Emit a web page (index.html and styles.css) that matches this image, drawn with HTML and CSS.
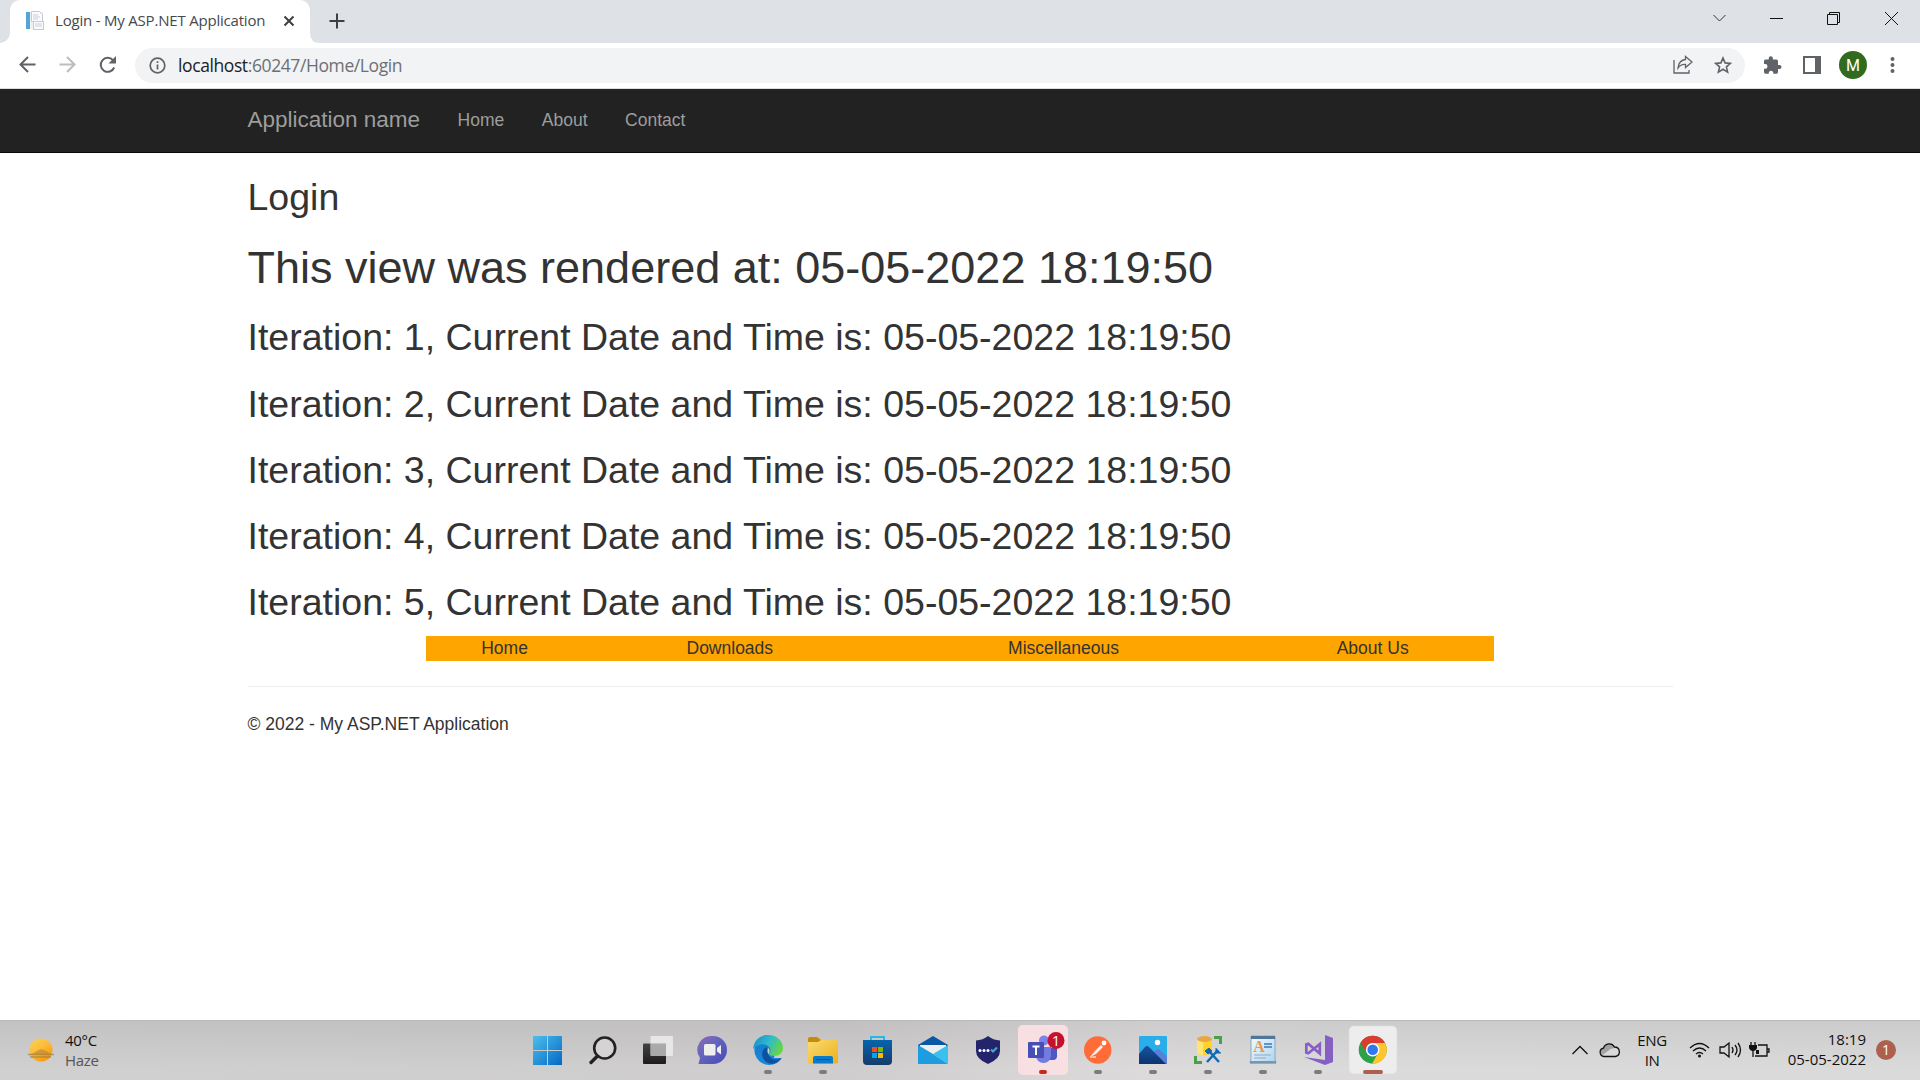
FILE: index.html
```html
<!DOCTYPE html>
<html lang="en">
<head>
<meta charset="utf-8">
<title>Login - My ASP.NET Application</title>
<link rel="stylesheet" href="styles.css">
</head>
<body>
<div class="desktop">
  <div class="tabstrip">
    <div class="tab">
      <svg class="favicon" width="20" height="20" viewBox="0 0 20 20"><rect x="1" y="1" width="17" height="17" fill="#eef0f4"/><rect x="1" y="1" width="4" height="17" fill="#54a5d6"/><path d="M6.500.5h8l3 3v7h-11z" fill="#fafbfd" stroke="#c5cad4"/><path d="M8 4h5M8 6h7M8 8h5" stroke="#c6cddb"/><rect x="8.500" y="10.500" width="10" height="8" fill="#fafbfd" stroke="#c5cad4"/><path d="M10 13h7M10 15h7" stroke="#c6cddb"/></svg>
      <span class="tab-title">Login - My ASP.NET Application</span>
      <svg width="12" height="12" viewBox="0 0 12 12" fill="none" stroke="#3c4043" stroke-width="2"><path d="M1.500 1.500l9 9M10.500 1.500l-9 9"/></svg>
      <svg class="tab-foot" width="10" height="10" viewBox="0 0 10 10"><path d="M0 0q0 10 10 10H0z" fill="#fff"/></svg>
    </div>
    <svg class="new-tab" width="16" height="16" viewBox="0 0 16 16" stroke="#3c4043" stroke-width="2"><path d="M8 .5v15M.5 8h15"/></svg>
    <svg class="window-controls" width="208" height="37" viewBox="0 0 208 37" fill="none" stroke="#111" stroke-width="1"><path d="M1.500 15l6 6 6-6" stroke="#333"/><path d="M58 18.500h13"/><path d="M115.500 14.500h10v10h-10zM117.500 14v-1.500h10v10H126"/><path d="M173 12l13 13M186 12l-13 13"/></svg>
  </div>
  <div class="toolbar">
    <svg width="97" height="45" viewBox="0 0 97 45" fill="none" stroke="#5f6368" stroke-width="2"><path d="M35.500 21.500H20.500M28 14l-7.500 7.500 7.500 7.500"/><path d="M59.500 21.500h15M67 14l7.500 7.500L67 29" stroke="#bbbdc0"/></svg>
    <svg class="reload" width="20" height="20" viewBox="0 0 20 20"><path d="M16.200 12.500A7 7 0 1 1 15 5.200" fill="none" stroke="#5f6368" stroke-width="2"/><path d="M18 1v7.500h-7.500z" fill="#5f6368"/></svg>
    <div class="omnibox">
      <svg width="17" height="17" viewBox="0 0 17 17" fill="none" stroke="#5f6368" stroke-width="1.700"><circle cx="8.500" cy="8.500" r="7.300"/><path d="M8.500 7.500v5M8.500 4.300v1.800"/></svg>
      <span class="url"><b>localhost</b>:60247/Home/Login</span>
      <svg class="share" width="20" height="20" viewBox="0 0 20 20" fill="none" stroke="#5f6368" stroke-width="1.300"><path d="M1 5v13h15v-3"/><path d="M12.500 1.500l6.500 5.500-6.500 5.500V9.500Q8 9 5 13q1-8 7.500-8.500z"/></svg>
      <svg width="18" height="18" viewBox="0 0 18 18" fill="none" stroke="#5f6368" stroke-width="1.600"><path d="M9 2l2.100 4.900 5.300.5-4 3.500 1.200 5.200L9 13.300l-4.600 2.800 1.200-5.200-4-3.500 5.300-.5z"/></svg>
    </div>
    <svg class="extension" width="19" height="19" viewBox="0 0 19 19"><path fill="#5f6368" d="M16.500 9H15V5q0-1.600-1.600-1.600H9.900v-1a2 2 0 0 0-4.200 0v1H2.400Q1 3.400 1 4.900v3.200h1.200a2.300 2.300 0 0 1 0 4.600H1V16q0 1.700 1.600 1.700h3.200v-1.200a2.300 2.300 0 0 1 4.500 0v1.200h3.200Q15 17.700 15 16v-3h1.500a2 2 0 0 0 0-4z"/></svg>
    <svg class="sidepanel" width="18" height="18" viewBox="0 0 18 18"><path d="M1 1h16v16H1z" fill="#fff" stroke="#5f6368" stroke-width="2"/><path d="M12 1h5v16h-5z" fill="#5f6368"/></svg>
    <div class="avatar">M</div>
    <svg class="more" width="5" height="18" viewBox="0 0 5 18" fill="#5f6368"><circle cx="2.500" cy="3" r="2"/><circle cx="2.500" cy="9" r="2"/><circle cx="2.500" cy="15" r="2"/></svg>
  </div>

  <div class="page">
    <nav class="navbar">
      <span class="brand">Application name</span>
      <span class="nav-link">Home</span>
      <span class="nav-link">About</span>
      <span class="nav-link">Contact</span>
    </nav>
    <main class="container">
      <h2>Login</h2>
      <h1>This view was rendered at: 05-05-2022 18:19:50</h1>
      <h2>Iteration: 1, Current Date and Time is: 05-05-2022 18:19:50</h2>
      <h2>Iteration: 2, Current Date and Time is: 05-05-2022 18:19:50</h2>
      <h2>Iteration: 3, Current Date and Time is: 05-05-2022 18:19:50</h2>
      <h2>Iteration: 4, Current Date and Time is: 05-05-2022 18:19:50</h2>
      <h2>Iteration: 5, Current Date and Time is: 05-05-2022 18:19:50</h2>
      <table class="menu"><tr><td>Home</td><td>Downloads</td><td>Miscellaneous</td><td>About Us</td></tr></table>
      <hr>
      <footer>© 2022 - My ASP.NET Application</footer>
    </main>
  </div>

  <div class="taskbar">
    <div class="weather">
      <svg width="28" height="28" viewBox="0 0 28 28"><defs><linearGradient id="sun" x1="0" y1="0" x2=".7" y2="1"><stop offset="0" stop-color="#fcd35a"/><stop offset=".5" stop-color="#fbbd3a"/><stop offset="1" stop-color="#f79a12"/></linearGradient></defs><circle cx="14" cy="13" r="11.500" fill="url(#sun)"/><path d="M4 17q4-1 6-3 4-3 7-1 4 1 6 4z" fill="#b98335" opacity=".6"/><path d="M1 17.500h26M3 20h21" stroke="#94733f" stroke-width="1.600" opacity=".6"/></svg>
      <div class="weather-text"><span>40°C</span><span class="muted">Haze</span></div>
    </div>
    <div class="apps">
      <svg viewBox="0 0 55 60"><defs><linearGradient id="win" gradientUnits="userSpaceOnUse" x1="13" y1="16" x2="42" y2="45"><stop offset="0" stop-color="#4cc0ec"/><stop offset="1" stop-color="#0467c4"/></linearGradient></defs><path fill="url(#win)" d="M13 16h14v14H13zM28 16h14v14H28zM13 31h14v14H13zM28 31h14v14H28z"/></svg>
      <svg viewBox="0 0 55 60" fill="none" stroke="#222"><circle cx="29.700" cy="28" r="10.500" stroke-width="2.600" fill="#d5d3d3"/><path d="M22 36.500l-6 6" stroke-width="3.400" stroke-linecap="round"/></svg>
      <svg viewBox="0 0 55 60"><defs><linearGradient id="tv" x1="0" y1="0" x2="0" y2="1"><stop offset="0" stop-color="#444"/><stop offset="1" stop-color="#1c1c1c"/></linearGradient></defs><rect x="13" y="23.500" width="23" height="20.500" rx="1" fill="url(#tv)"/><rect x="20.500" y="16" width="22.500" height="20" rx="1" fill="#ececec" opacity=".85"/><path d="M20.500 23.500H36V36H20.500z" fill="#999" opacity=".7"/></svg>
      <svg viewBox="0 0 55 60"><defs><linearGradient id="chat" x1="0" y1="0" x2="1" y2="1"><stop offset="0" stop-color="#9268b5"/><stop offset=".4" stop-color="#6566bd"/><stop offset="1" stop-color="#4648b8"/></linearGradient></defs><path d="M28 16a14 14 0 1 1 0 28H13.500l1.500-6A14 14 0 0 1 28 16z" fill="url(#chat)"/><rect x="19" y="24" width="11.500" height="11.500" rx="1.500" fill="#eee"/><path d="M32 28l4-3v9.500l-4-3z" fill="#eee"/></svg>
      <svg viewBox="0 0 55 60"><defs><linearGradient id="eg" x1="0" y1=".2" x2="1" y2=".6"><stop offset="0" stop-color="#1b8cd0"/><stop offset=".5" stop-color="#2fbcc8"/><stop offset="1" stop-color="#68d640"/></linearGradient><linearGradient id="eb" x1="0" y1="0" x2="0" y2="1"><stop offset="0" stop-color="#167ac8"/><stop offset="1" stop-color="#1787db"/></linearGradient></defs><path d="M42 38A15 15 0 1 1 28 15l8 12-2 11z" fill="url(#eb)"/><path d="M13 29C14 20 20 15 28 15c9 0 15 6 15 13 0 5-4 8-9 8-3 0-5-1-5-2 2-2 2-5 0-7-3-4-11-4-16 2z" fill="url(#eg)"/><path d="M27 27q-5 2-5 7 1 9 10 10 6-1 9-6-6 3-10 0-4-3-4-11z" fill="#11509f"/><path d="M28 27.500q2 2 1.500 4.500-1 1.500 0 2.500-2-1-2-3z" fill="#d1cfd0"/><rect class="dot" x="24" y="50" width="8" height="4" rx="2"/></svg>
      <svg viewBox="0 0 55 60"><defs><linearGradient id="fold" x1="0" y1="0" x2="1" y2="1"><stop offset="0" stop-color="#f9dc72"/><stop offset="1" stop-color="#edaf18"/></linearGradient></defs><path d="M13 19q0-2 2-2h7l4 3v4H13z" fill="#c98b04"/><path d="M13 22h10l3-2h17v22q0 1.500-1.500 1.500h-27Q13 43.500 13 42z" fill="url(#fold)"/><path d="M18 43.500V38q0-2 2-2h16q2 0 2 2v5.500z" fill="#087bcc"/><path d="M21 39.500h14" stroke="#075295"/><rect class="dot" x="24" y="50" width="8" height="4" rx="2"/></svg>
      <svg viewBox="0 0 55 60"><defs><linearGradient id="store" x1="0" y1="0" x2="0" y2="1"><stop offset="0" stop-color="#0764ae"/><stop offset="1" stop-color="#173b68"/></linearGradient></defs><path d="M21 22v-5h13v5" fill="none" stroke="#28b8e8" stroke-width="2"/><path d="M13 20h29v21q0 4-4 4H17q-4 0-4-4z" fill="url(#store)"/><path fill="#f05021" d="M22 27h5v5h-5z"/><path fill="#7aba00" d="M28 27h5v5h-5z"/><path fill="#04a4ef" d="M22 33h5v5h-5z"/><path fill="#fdb900" d="M28 33h5v5h-5z"/></svg>
      <svg viewBox="0 0 55 60"><path d="M13 25l15-9 15 9v5H13z" fill="#0a58a4"/><path d="M15 25h26v7L28 36l-13-4z" fill="#eee"/><path d="M13 25l15 9 15 10H13z" fill="#1d9ce0"/><path d="M43 25L28 34l15 10z" fill="#38c0ee"/></svg>
      <svg viewBox="0 0 55 60"><path d="M28 16q5 4 12 4.500V31q0 8-12 13-12-5-12-13V20.500Q23 20 28 16z" fill="#24246c"/><g fill="#fff"><circle cx="20" cy="30.500" r="1.500"/><circle cx="24" cy="30.500" r="1.500"/><circle cx="28" cy="30.500" r="1.500"/></g><path d="M31 29.500l2 2 4-4" fill="none" stroke="#42abc8" stroke-width="2"/></svg>
      <svg viewBox="0 0 55 60"><rect x="3" y="5" width="50" height="50" rx="5" fill="#f8e0e2"/><circle cx="29" cy="20.500" r="5" fill="#7b83eb"/><path d="M32 28h10v8q0 4-4 4h-4z" fill="#4e56bf"/><path d="M21 27h15v9q-1 7-7.500 7T21 36z" fill="#737be0"/><rect x="13" y="22" width="16" height="16" rx="1" fill="#484fb4"/><path d="M17.500 26.500h7M21 26.500V35" stroke="#fff" stroke-width="2"/><circle cx="41" cy="20.500" r="8.500" fill="#c4122e"/><text x="41" y="25.500" class="badge-text">1</text><rect x="24" y="50" width="8" height="4" rx="2" fill="#c42b1c"/></svg>
      <svg viewBox="0 0 55 60"><circle cx="27.700" cy="30" r="13.700" fill="#ff6c37"/><circle cx="34" cy="23" r="2.400" fill="#fff"/><path d="M20 37l4-5 7-7 2 2-7 7z" fill="#ffece5"/><path d="M20 37h6" stroke="#fff"/><rect class="dot" x="24" y="50" width="8" height="4" rx="2"/></svg>
      <svg viewBox="0 0 55 60"><defs><linearGradient id="mt" x1="0" y1="0" x2="0" y2="1"><stop offset="0" stop-color="#17559f"/><stop offset="1" stop-color="#0b3370"/></linearGradient></defs><rect x="14" y="16" width="28" height="28" rx="1" fill="#29aee9"/><path d="M26 35l5-5q2-2 4 0l7 7v7H26z" fill="#5b7fd8"/><path d="M14 34l6-7q2-2 4 0l17 17H14z" fill="url(#mt)"/><circle cx="32.500" cy="22.500" r="2.700" fill="#fff"/><rect class="dot" x="24" y="50" width="8" height="4" rx="2"/></svg>
      <svg viewBox="0 0 55 60"><path d="M17 19v13q0 3 7 3t8-3V19z" fill="#ffd42a"/><path d="M17 19v13q0 3 6 3V19z" fill="#ffe672"/><ellipse cx="24.500" cy="19" rx="7.500" ry="3" fill="#e8a744"/><path d="M34 17.500h6.500V24M15.500 36v6.500H22" fill="none" stroke="#4a9f4a" stroke-width="3"/><path d="M28 30l11 12M38 30L27 42" stroke="#1169b5" stroke-width="2.500"/><path d="M25 31l4-3 3 3-4 3zM36 28v5h5" fill="#1169b5" stroke="#1169b5"/><rect class="dot" x="24" y="50" width="8" height="4" rx="2"/></svg>
      <svg viewBox="0 0 55 60"><defs><linearGradient id="wp" x1="0" y1="0" x2="1" y2="1"><stop offset="0" stop-color="#f5fbff"/><stop offset="1" stop-color="#acd4ef"/></linearGradient></defs><path d="M16 16h24v23l1 4H15l1-4z" fill="url(#wp)" stroke="#86a9c4"/><path d="M16 16h24v3H16z" fill="#50779b"/><path d="M15 41h26v2.500H15z" fill="#7896b0"/><text x="24" y="32" class="wordpad-a">A</text><path d="M29 24h8M29 27h8" stroke="#3e78bd" stroke-width="1.500"/><path d="M19 35h17M19 38h12" stroke="#92a9bc"/><rect class="dot" x="24" y="50" width="8" height="4" rx="2"/></svg>
      <svg viewBox="0 0 55 60" fill="#865fc5"><path d="M35 15l8 3v24l-8 3-21-8 21 3z"/><path d="M16.300 24.500v8l2 .8 11.500-9.300v9.500L18.300 23.700z" fill="none" stroke="#865fc5" stroke-width="2.700"/><rect class="dot" x="24" y="50" width="8" height="4" rx="2"/></svg>
      <svg viewBox="0 0 55 60"><rect x="4" y="6" width="48" height="48" rx="5" fill="#ededed" stroke="#dedede" stroke-width=".7"/><circle cx="27.700" cy="29.700" r="14" fill="#2da04a"/><path d="M27.700 22.900H40A14 14 0 0 1 27 43.700l6-10.500z" fill="#fdc62d"/><path d="M15.500 22.900L21 32l2-8 5-1.100H40q-4-7.200-12.300-7.200-8 0-12.200 7.200z" fill="#dc3c30"/><circle cx="27.700" cy="29.700" r="6.800" fill="#fff"/><circle cx="27.700" cy="29.700" r="5.300" fill="#3079ed"/><rect x="18" y="50" width="20" height="4" rx="2" fill="#ad6050"/></svg>
    </div>
    <div class="tray">
      <svg class="chevron" width="16" height="10" viewBox="0 0 16 10" fill="none" stroke="#111" stroke-width="1.300"><path d="M.5 9L8 1.500 15.500 9"/></svg>
      <svg class="cloud" width="21" height="16" viewBox="0 0 21 16"><path d="M5 14.500a4.200 4.200 0 0 1-.5-8.300 6 6 0 0 1 11-1.200 4.800 4.800 0 0 1 1 9.500z" fill="#d8d8d8"/><path d="M1 9.500q.5-3 3.500-3.300a6 6 0 0 1 11-1.200l2 .5-6 1.500-8 6z" fill="#a2a2a2"/><path d="M5 14.500a4.200 4.200 0 0 1-.5-8.300 6 6 0 0 1 11-1.200 4.800 4.800 0 0 1 1 9.500z" fill="none" stroke="#111" stroke-width="1.300"/></svg>
      <div class="language"><span>ENG</span><span>IN</span></div>
      <svg class="status" width="81" height="18" viewBox="0 0 81 18" fill="none" stroke="#111" stroke-width="1.300"><path d="M1 7q9.500-9 19 0M4 10q6.500-6 13 0M7 13q3.500-3 7 0"/><circle cx="10.500" cy="15" r="1.500" fill="#111" stroke="none"/><path d="M31 6h4l5-4v14l-5-4h-4zM43 6q2 3 0 6M46 4q4 5 0 10M49 2q5 7 0 14"/><path d="M69 4h9v11H66M78 8h2v3h-2M62 1v4M66 1v4M64 9v7"/><path d="M60 4h8v3q-1 3-4 3t-4-3zM67 9h3v4h-3z" fill="#111" stroke="none"/></svg>
      <div class="clock"><span>18:19</span><span>05-05-2022</span></div>
      <div class="notifications">1</div>
    </div>
  </div>
</div>
</body>
</html>
```
FILE: styles.css
```css
* { box-sizing: border-box; }
body { margin: 0; background: #fff; }
svg { display: block; flex: none; }
.desktop { display: flex; flex-direction: column; width: 1920px; height: 1080px; overflow: hidden; }

.tabstrip { display: flex; align-items: center; height: 43px; flex: none; background: #dee1e6; font-family: "Open Sans", sans-serif; }
.tab { position: relative; display: flex; align-items: center; width: 300px; height: 43px; margin-left: 10px; padding: 0 15px 1px; background: #fff; border-radius: 10px 10px 0 0; }
.tab::before { content: ""; position: absolute; left: -10px; bottom: 0; width: 10px; height: 10px; background: radial-gradient(circle at 0 0, #dee1e6 9.5px, #fff 10px); }
.tab-foot { position: absolute; left: 300px; bottom: 0; }
.tab-title { width: 229px; margin: 0 1px 2px 10px; font-size: 15px; letter-spacing: -0.2px; color: #45494d; white-space: nowrap; }
.new-tab { margin: 0 0 1px 19px; }
.window-controls { align-self: flex-start; margin-left: auto; }

.toolbar { display: flex; align-items: center; height: 46px; flex: none; border-bottom: 1px solid #dadcde; background: #fff; font-family: "Open Sans", sans-serif; }
.toolbar > svg, .avatar { margin-bottom: 1px; }
.toolbar > svg:first-child { margin-bottom: 0; }
.toolbar .reload { margin: 0 18px 2px 1px; }
.omnibox { display: flex; align-items: center; width: 1610px; height: 35px; margin: 0 0 1px -1px; padding: 0 13px 0 14px; border-radius: 18px; background: #f1f3f4; flex: none; }
.url { margin: 0 auto 0 12px; font-size: 17.5px; letter-spacing: -0.4px; color: #6c7075; white-space: nowrap; }
.url b { font-weight: 400; color: #202124; }
.share { margin-right: 21px; }
.extension { margin-left: 18px; }
.sidepanel { margin-left: 21px; }
.avatar { display: flex; align-items: center; justify-content: center; width: 28px; height: 28px; margin-left: 18px; border-radius: 50%; background: #326b1f; color: #fff; font: 16px Roboto, sans-serif; flex: none; }
.more { margin-left: 23px; }

.page { height: 931px; flex: none; font: 17.5px/25px "Liberation Sans", Arial, sans-serif; color: #333; }
.navbar { display: flex; height: 64px; padding-left: 247.5px; background: #222; border-bottom: 1px solid #080808; color: #9d9d9d; line-height: 25px; }
.brand { padding: 18px 18.75px 0 0; font-size: 22.5px; }
.nav-link { padding: 18.75px 18.75px 0; }
.container { width: 1425px; margin: 0 auto; padding-top: 23.5px; }
h1, h2 { margin: 25px 0 12.5px; font-weight: 400; line-height: 1.1; }
.container > h2:first-child { margin-top: 0; }
h1 { font-size: 45px; }
h2 { font-size: 37.5px; }
.menu { width: 75%; margin: 0 auto; border-collapse: collapse; background: orange; text-align: center; }
.menu td { padding: 0; }
hr { height: 1px; margin: 25px 0; border: 0; background: #eee; }

.taskbar { display: grid; grid-template-columns: 520px 880px 1fr; height: 60px; flex: none; border-top: 1px solid #b9b9b9; background: linear-gradient(#0001, #0000 80%), linear-gradient(90deg, #d0d0d0, #cfcdce 850px, #dcdada 1150px, #dadada); font: 15px/20px "Open Sans", "Noto Sans", sans-serif; color: #111; }
.weather { display: flex; align-items: center; padding-left: 27px; }
.weather-text { display: flex; flex-direction: column; margin: -2px 0 0 10px; letter-spacing: -0.3px; }
.muted { color: #555; }
.apps { display: grid; grid-template-columns: repeat(16, 55px); margin-top: -1px; }
.apps svg { width: 55px; height: 60px; }
.dot { fill: #7c7c7c; }
.badge-text { font: 14px "Open Sans", sans-serif; fill: #fff; text-anchor: middle; }
.wordpad-a { font: bold 16px "Liberation Serif", serif; fill: #ec984b; text-anchor: middle; }
.tray { display: flex; align-items: center; padding: 0 0 1px 172px; letter-spacing: -0.4px; }
.cloud { margin-left: 11px; }
.language, .clock { display: flex; flex-direction: column; }
.language { width: 40px; margin: -1px 0 0 12px; align-items: center; }
.status { margin-left: 17px; }
.clock { width: 96px; margin: -3px 10px 0 0; align-items: flex-end; white-space: nowrap; letter-spacing: 0; }
.notifications { display: flex; align-items: center; justify-content: center; width: 20px; height: 20px; border-radius: 50%; background: #ad604e; color: #fff; font-size: 14px; letter-spacing: 0; }
```
